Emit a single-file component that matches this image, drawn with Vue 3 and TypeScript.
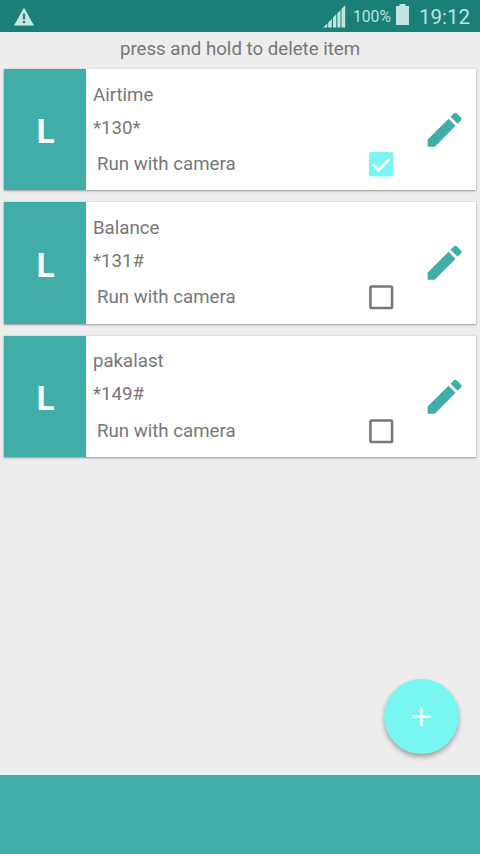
<script setup lang="ts">
import { ref } from 'vue'

interface Item {
  name: string
  code: string
  camera: boolean
}

const items = ref<Item[]>([
  { name: 'Airtime', code: '*130*', camera: true },
  { name: 'Balance', code: '*131#', camera: false },
  { name: 'pakalast', code: '*149#', camera: false },
])
</script>

<template>
  <div class="screen">
    <header class="status">
      <svg class="warn" viewBox="0 0 20 19">
        <path d="M10 0.5 20 18.5H0Z" fill="#c3e9e4" />
        <path d="M8.8 6.5h2.4v6H8.8zM8.8 14h2.4v2.2H8.8z" fill="#3f7f79" />
      </svg>
      <svg class="signal" viewBox="0 0 23 23">
        <path d="M0 22.5 4.300 18.500v4zM5.200 17.400 8.800 13.800v8.700H5.200zM10 12.600 13.300 9.300v13.200H10zM14.400 8.200 17.500 5.100v17.400h-3.100zM18.500 4 22.200 0.300v22.200h-3.700z" />
      </svg>
      <span class="percent">100%</span>
      <svg class="battery" viewBox="0 0 13 21">
        <path d="M3.500 0h6v2H13v19H0V2h3.500z" />
      </svg>
      <span class="clock">19:12</span>
    </header>

    <main class="body">
      <p class="hint">press and hold to delete item</p>
      <ul class="list">
        <li v-for="item in items" :key="item.name" class="card">
          <div class="letter"><span>L</span></div>
          <div class="info">
            <div class="line">{{ item.name }}</div>
            <div class="line">{{ item.code }}</div>
            <div class="option" @click="item.camera = !item.camera">
              <span>Run with camera</span>
              <svg class="check" viewBox="0 0 24 24">
                <template v-if="item.camera">
                  <rect x="3" y="3" width="18" height="18" rx="1.500" fill="#79f5f2" />
                  <path d="M5.700 12 10 16.300 18.300 8" fill="none" stroke="#f4fffe" stroke-width="2.200" />
                </template>
                <rect v-else x="4" y="4" width="16" height="16" rx="1" fill="none" stroke="#777" stroke-width="1.900" />
              </svg>
            </div>
          </div>
          <svg class="edit" viewBox="0 0 24 24">
            <path d="M3 17.250V21h3.750L17.810 9.940l-3.750-3.750L3 17.250zM20.710 7.040c.39-.39.39-1.020 0-1.410l-2.340-2.340c-.39-.39-1.020-.39-1.410 0l-1.830 1.830 3.750 3.750 1.830-1.830z" />
          </svg>
        </li>
      </ul>
      <button class="fab" type="button">
        <svg viewBox="0 0 24 24"><path d="M19 13h-6v6h-2v-6H5v-2h6V5h2v6h6v2z" /></svg>
      </button>
    </main>

    <footer class="bottom"></footer>
  </div>
</template>

<style>
body {
  margin: 0;
}
</style>

<style scoped>
.screen {
  width: 480px;
  height: 854px;
  display: flex;
  flex-direction: column;
  overflow: hidden;
  background: #ededed;
  color: #777;
  font-family: Roboto, "Liberation Sans", sans-serif;
  font-size: 18.670px;
}
.status {
  flex: none;
  height: 32px;
  box-sizing: border-box;
  display: flex;
  align-items: center;
  padding: 0 10px 0 14px;
  background: #1a7f77;
  color: #b9e3de;
}
.status svg {
  display: block;
  flex: none;
  fill: #c3e5e1;
}
.warn {
  width: 20px;
  height: 19px;
  margin-right: auto;
}
.signal {
  width: 23px;
  height: 23px;
  margin-right: 7px;
}
.percent {
  width: 38px;
  font-size: 15.700px;
  line-height: 32px;
  padding-top: 2px;
  margin-right: 5px;
  white-space: nowrap;
}
.status .battery {
  width: 13px;
  height: 21px;
  margin: -3px 10px 0 0;
}
.clock {
  font-size: 20.500px;
  line-height: 32px;
  padding-top: 2px;
}
.body {
  position: relative;
  flex: 1;
}
.hint {
  height: 37px;
  margin: 0;
  line-height: 34px;
  text-align: center;
}
.list {
  margin: 0;
  padding: 0 4px;
  list-style: none;
  display: flex;
  flex-direction: column;
  gap: 12px;
}
.card {
  height: 121.400px;
  display: flex;
  background: #fff;
  box-shadow: 0 1px 2px rgba(0, 0, 0, 0.340), 0 0 1px rgba(0, 0, 0, 0.200);
}
.letter {
  width: 82px;
  box-sizing: border-box;
  padding: 4px 0 0 1px;
  display: flex;
  align-items: center;
  justify-content: center;
  background: #40ada8;
  color: #fff;
  font-size: 33.500px;
  font-weight: 700;
}
.info {
  width: 301px;
  padding: 9.500px 0 0 7px;
}
.line {
  height: 33px;
  line-height: 33px;
}
.option {
  display: flex;
  align-items: center;
  justify-content: space-between;
  height: 38.500px;
  padding-left: 4px;
}
.check {
  width: 32.500px;
  height: 32.500px;
  margin-top: 1px;
  margin-right: -3px;
}
.edit {
  width: 45.300px;
  height: 45.300px;
  margin: 38px 0 0 27.600px;
  fill: #40ada8;
}
.fab {
  position: absolute;
  right: 21px;
  bottom: 21.500px;
  width: 75px;
  height: 75px;
  padding: 0;
  display: flex;
  align-items: center;
  justify-content: center;
  border: 0;
  border-radius: 50%;
  background: #79f5f2;
  box-shadow: 0 3px 5px rgba(0, 0, 0, 0.330);
}
.fab svg {
  width: 33px;
  height: 33px;
  fill: #e6fffd;
}
.bottom {
  flex: none;
  height: 79px;
  background: #40ada8;
}
</style>
